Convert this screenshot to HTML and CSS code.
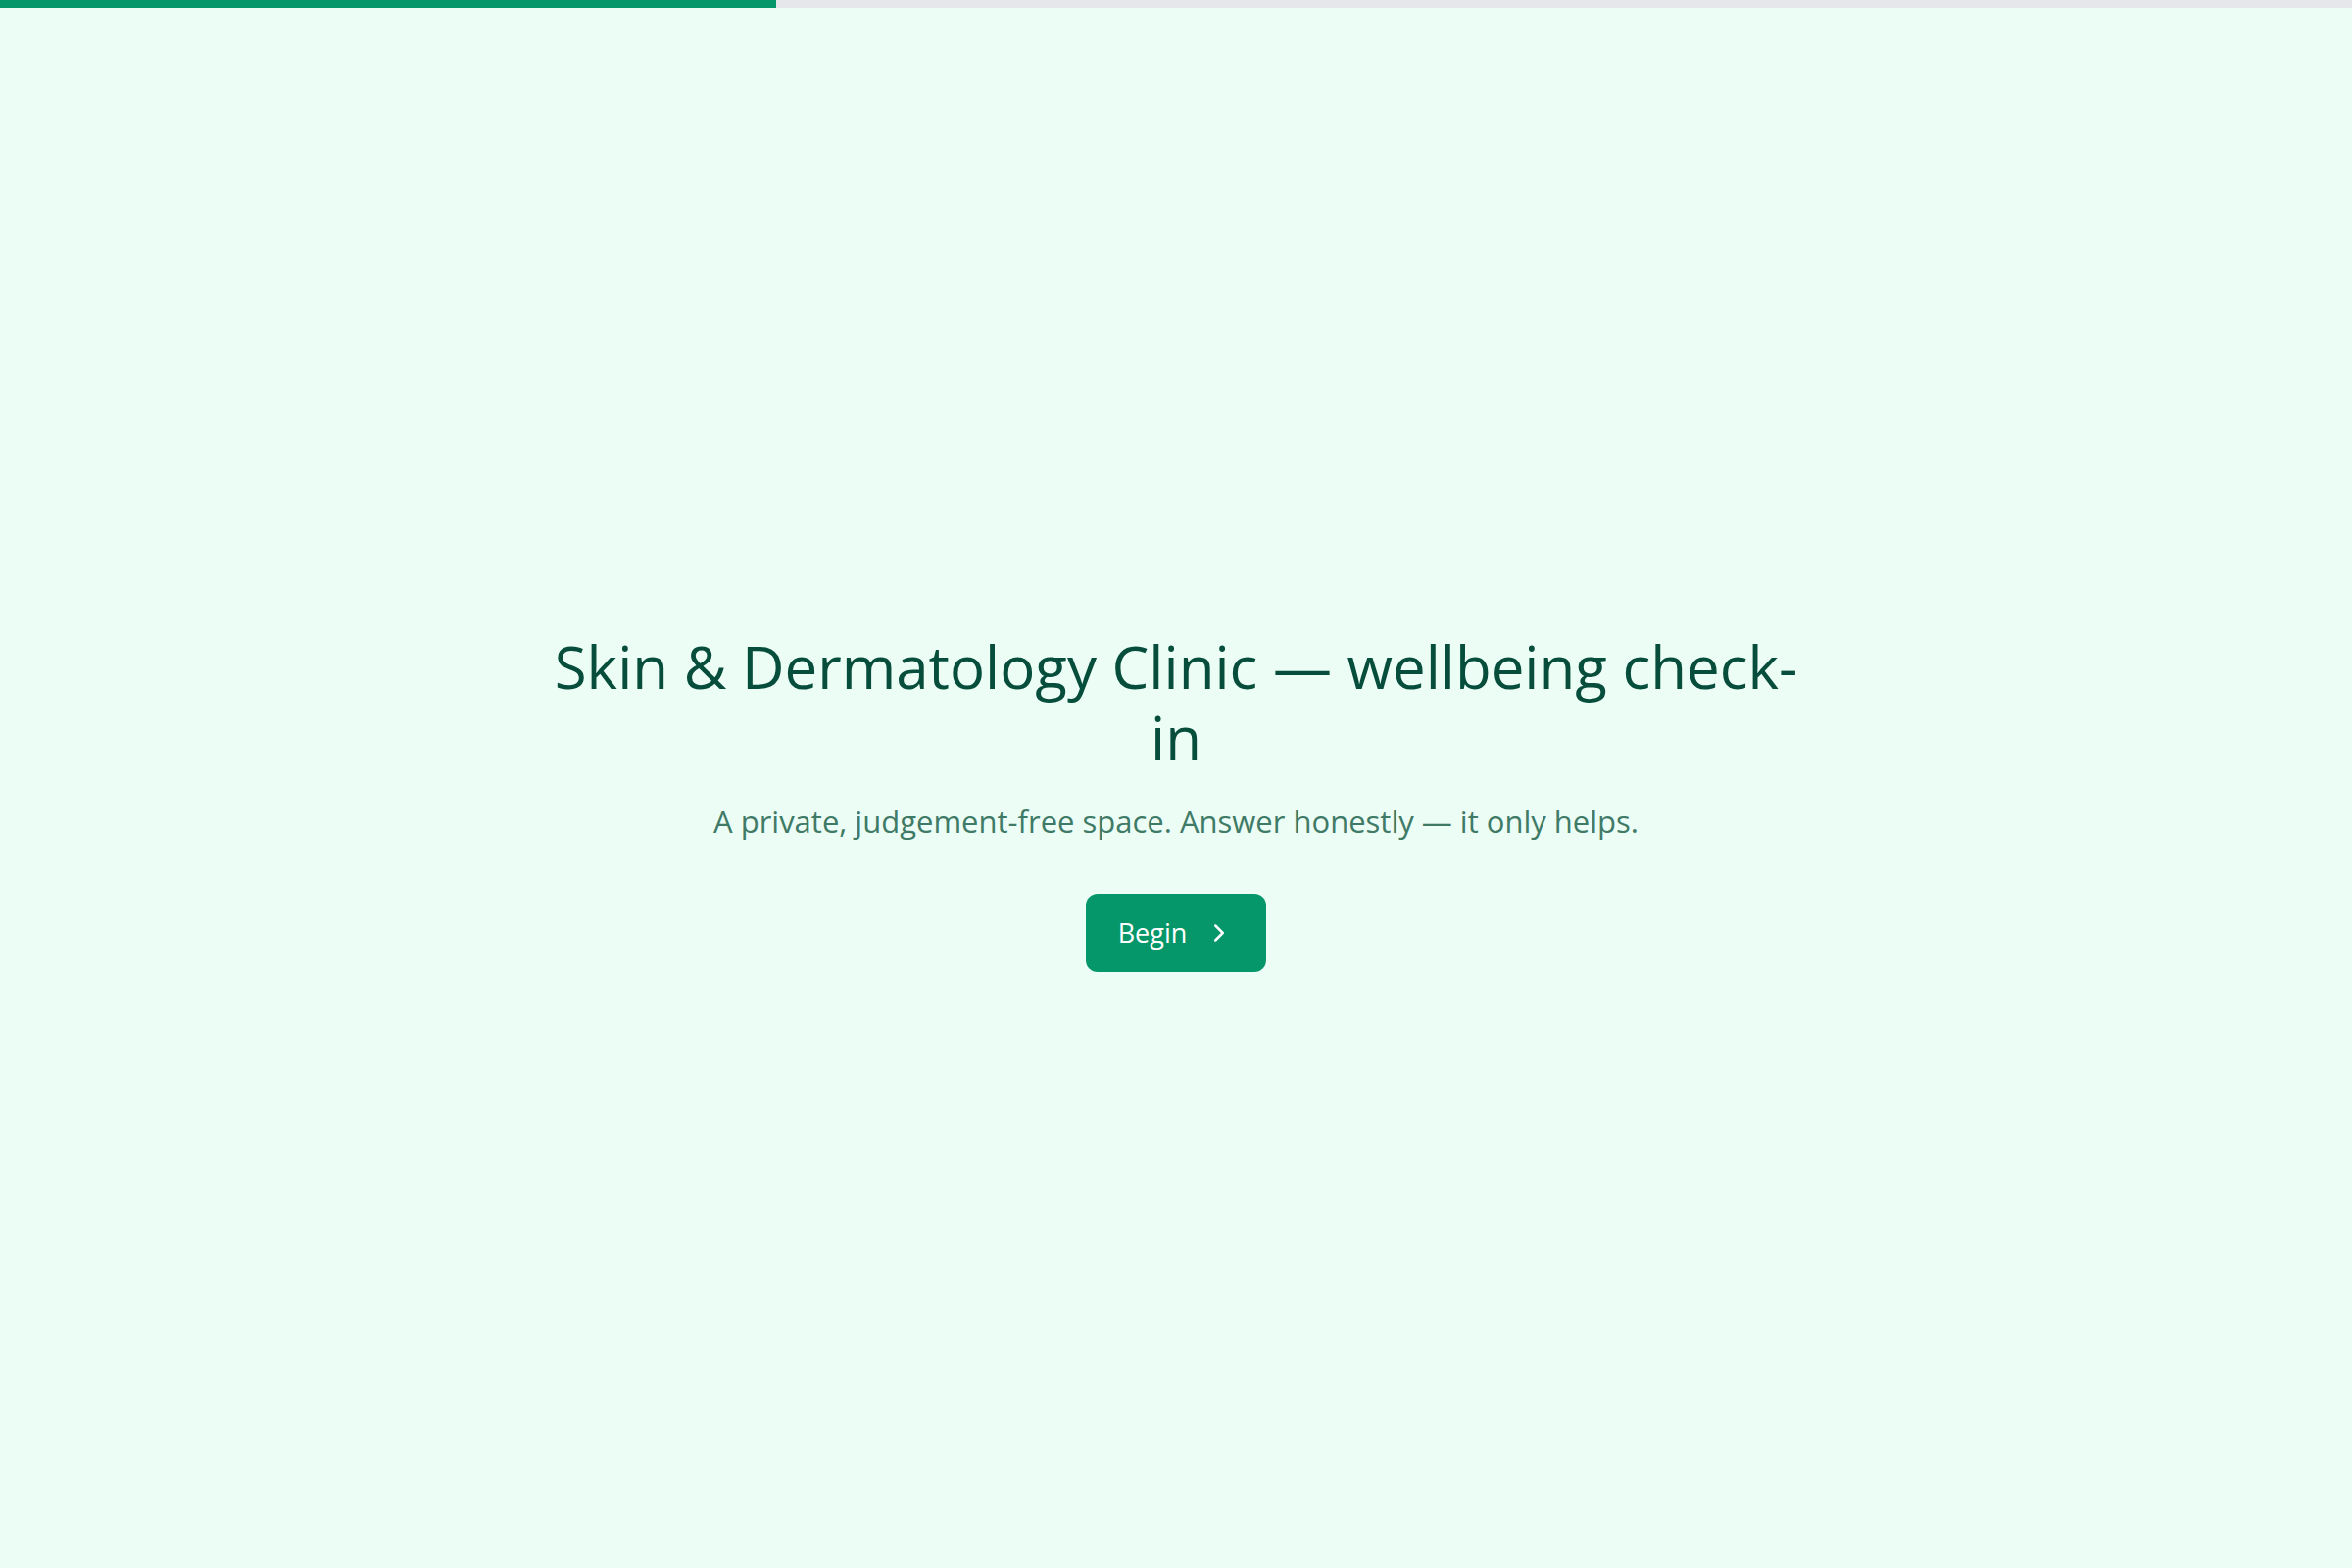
FILE: index.html
```html
<!DOCTYPE html>
<html lang="en">
<head>
<meta charset="utf-8">
<title>Skin &amp; Dermatology Clinic — wellbeing check-in</title>
<link rel="stylesheet" href="styles.css">
</head>
<body>
<div class="progress"><div class="progress-fill" style="width:33%"></div></div>
<main class="intro">
  <h1 class="intro-title">Skin &amp; Dermatology Clinic — wellbeing check-in</h1>
  <p class="intro-sub">A private, judgement-free space. Answer honestly — it only helps.</p>
  <button class="btn-primary" type="button">
    <span>Begin</span>
    <svg class="btn-icon" viewBox="0 0 24 24" fill="none" stroke="currentColor" stroke-width="2" stroke-linecap="round" stroke-linejoin="round"><path d="m9 18 6-6-6-6"/></svg>
  </button>
</main>
</body>
</html>
```
FILE: styles.css
```css
html, body {
  margin: 0;
  padding: 0;
}
body {
  min-height: 100vh;
  background: #ecfdf5;
  font-family: "Open Sans", "Noto Sans", sans-serif;
  display: flex;
  flex-direction: column;
}
.progress {
  height: 8px;
  background: #e5e7eb;
  flex: none;
}
.progress-fill {
  height: 100%;
  background: #059669;
}
.intro {
  flex: 1;
  display: flex;
  flex-direction: column;
  align-items: center;
  justify-content: center;
  text-align: center;
  padding: 27px 24px 0;
}
.intro-title {
  margin: 0;
  max-width: 1290px;
  font-size: 60px;
  line-height: 72px;
  font-weight: 400;
  color: #064e3b;
}
.intro-sub {
  margin: 27px 0 0;
  font-size: 31px;
  line-height: 46px;
  color: #3f7a67;
}
.btn-primary {
  margin-top: 51px;
  height: 80px;
  display: inline-flex;
  align-items: center;
  gap: 18px;
  padding: 0 33px;
  border: none;
  border-radius: 12px;
  background: #059669;
  color: #ffffff;
  font-family: inherit;
  font-size: 27px;
  line-height: 42px;
  cursor: pointer;
}
.btn-icon {
  width: 30px;
  height: 30px;
}
```
